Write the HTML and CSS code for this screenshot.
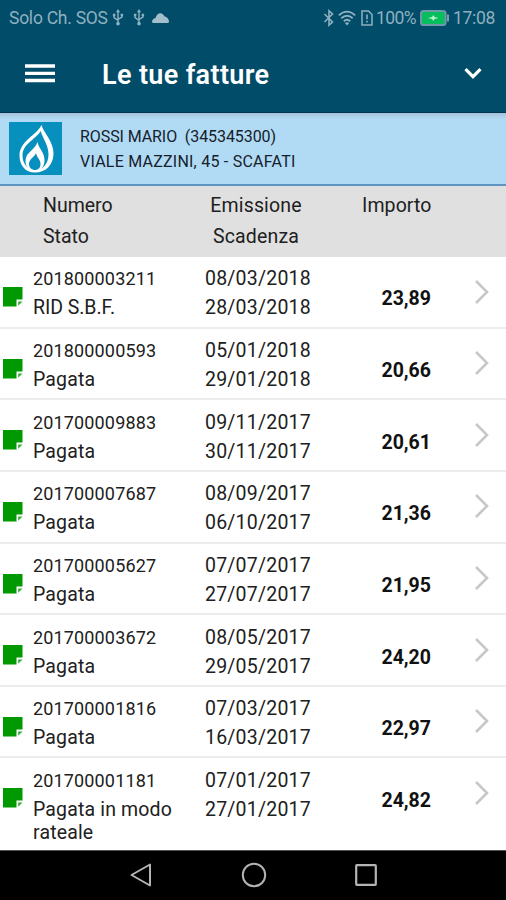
FILE: index.html
```html
<!DOCTYPE html>
<html lang="it">
<head>
<meta charset="utf-8">
<title>Le tue fatture</title>
<link rel="stylesheet" href="styles.css">
</head>
<body>
<svg class="defs" width="0" height="0">
  <symbol id="usb" viewBox="0 0 12 18"><path d="M6 2v14M1.8 6v3.2L6 12M10.2 6v2.5L6 11" fill="none" stroke="currentColor" stroke-width="1.5"/><path d="M6 0L3.8 3.5h4.4zM.6 5h2.6v2.6H.6zM8.8 5h2.6v2.6H8.8z" fill="currentColor"/><circle cx="6" cy="15.5" r="1.900" fill="currentColor"/></symbol>
  <symbol id="note" viewBox="0 0 20 20"><path d="M0 0h19.5v12.500h-6v7H0z" fill="#009900"/><path d="M15.200 18.800v-4.300h4.300z" fill="#009900" opacity=".8"/></symbol>
  <symbol id="next" viewBox="0 0 16 26"><path d="M2 2l11 11L2 24" fill="none" stroke="#c7c7c7" stroke-width="2.6"/></symbol>
</svg>
<header class="top">
  <div class="status">
    <span class="carrier">Solo Ch. SOS</span>
    <svg class="usb" width="12" height="17"><use href="#usb"/></svg>
    <svg class="usb second" width="12" height="17"><use href="#usb"/></svg>
    <svg class="cloud" width="17" height="10" viewBox="0 0 17 10"><path d="M1.500 10Q0 10 0 8.500C.3 6.800 1.500 5.500 3.500 5 4.500 2 6 .3 8.300.3c2 0 3.300 1.400 4 3C15 4 17 6 17 8.500Q17 10 15.500 10z" fill="#a3bfcb"/></svg>
    <span class="grow"></span>
    <svg class="bt" width="12" height="18" viewBox="0 0 12 18"><path d="M1.500 5l8 8L6 16.200V1.800L9.500 5l-8 8" fill="none" stroke="currentColor" stroke-width="1.600"/></svg>
    <svg class="wifi" width="18" height="16" viewBox="0 0 18 16"><path d="M.8 5.300Q9-2 17.200 5.300M3.300 8.300Q9 3.300 14.700 8.300M5.800 11.200Q9 8.400 12.200 11.200" fill="none" stroke="currentColor" stroke-width="1.800"/><path d="M6.800 13Q9 11.500 11.200 13L9 15.500z" fill="currentColor"/></svg>
    <svg class="sim" width="12" height="16" viewBox="0 0 12 16"><path d="M1 1h6.500L11 4.500V15H1z" fill="none" stroke="currentColor" stroke-width="1.500"/><path d="M6 4.500v4.800M6 10.800v1.800" stroke="currentColor" stroke-width="1.600"/></svg>
    <span class="percent">100%</span>
    <svg class="battery" width="29" height="16" viewBox="0 0 29 16"><rect x="1" y="1" width="24.600" height="14" rx="2.500" fill="#06bf5c" stroke="#6f98aa" stroke-width="2"/><path d="M28 4.500v7" stroke="#8fabb9" stroke-width="1.700"/><path d="M8 8l4-1L13.300 5l1.200 2 4 1-4 1-1.200 2L12 9z" fill="#b9f3cf"/></svg>
    <span class="clock">17:08</span>
  </div>
  <div class="appbar">
    <svg class="menu" width="30" height="20" viewBox="0 0 30 20"><path d="M0 2h30M0 9.300h30M0 16.500h30" stroke="#fff" stroke-width="3.300"/></svg>
    <h1>Le tue fatture</h1>
    <svg class="down" width="18" height="13" viewBox="0 0 18 13"><path d="M1.500 2.200L9 9.700l7.500-7.500" fill="none" stroke="#fff" stroke-width="3.200"/></svg>
  </div>
</header>
<section class="customer">
  <svg class="logo" width="53" height="53" viewBox="0 0 53 53"><path d="M0 0h53v53H0z" fill="#078fbd"/><path fill-rule="evenodd" d="M32.500 3C34.500 11 44.500 19 44.500 31.500c0 11-7.500 19-18.500 19-10 0-15.500-7.500-15.500-17C10.500 19 28 13 32.500 3zM31.700 9C26 18 13.500 22 13.500 33.500c0 8 5 14.500 12.500 14.500 8 0 13.500-6.500 13.500-15.500 0-9.500-5.500-15.500-7.800-23.500z" fill="#fff"/><path fill-rule="evenodd" d="M28.500 20C30 27 35.500 30 35.500 38.500c0 6-4 10.500-9.500 10.500S16.500 45 16.500 39C16.500 30 26 28 28.500 20zM27 31C25 36 20 36.500 20 42c0 3.500 2.500 6 6 6s5.500-2.500 5.500-6c0-4.500-3.500-6-4.500-11z" fill="#fff"/></svg>
  <div class="who"><div class="name">ROSSI MARIO &nbsp;(345345300)</div><div class="address">VIALE MAZZINI, 45 - SCAFATI</div></div>
</section>
<div class="heads">
  <div class="h-left"><div>Numero</div><div>Stato</div></div>
  <div class="h-mid"><div>Emissione</div><div>Scadenza</div></div>
  <div class="h-right">Importo</div>
</div>
<main>
  <article class="row"><svg class="note"><use href="#note"/></svg><div class="bill"><div class="num">201800003211</div><div class="state rid">RID S.B.F.</div></div><div class="dates"><div>08/03/2018</div><div>28/03/2018</div></div><div class="amount">23,89</div><svg class="next"><use href="#next"/></svg></article>
  <article class="row"><svg class="note"><use href="#note"/></svg><div class="bill"><div class="num">201800000593</div><div class="state">Pagata</div></div><div class="dates"><div>05/01/2018</div><div>29/01/2018</div></div><div class="amount">20,66</div><svg class="next"><use href="#next"/></svg></article>
  <article class="row"><svg class="note"><use href="#note"/></svg><div class="bill"><div class="num">201700009883</div><div class="state">Pagata</div></div><div class="dates"><div>09/11/2017</div><div>30/11/2017</div></div><div class="amount">20,61</div><svg class="next"><use href="#next"/></svg></article>
  <article class="row"><svg class="note"><use href="#note"/></svg><div class="bill"><div class="num">201700007687</div><div class="state">Pagata</div></div><div class="dates"><div>08/09/2017</div><div>06/10/2017</div></div><div class="amount">21,36</div><svg class="next"><use href="#next"/></svg></article>
  <article class="row"><svg class="note"><use href="#note"/></svg><div class="bill"><div class="num">201700005627</div><div class="state">Pagata</div></div><div class="dates"><div>07/07/2017</div><div>27/07/2017</div></div><div class="amount">21,95</div><svg class="next"><use href="#next"/></svg></article>
  <article class="row"><svg class="note"><use href="#note"/></svg><div class="bill"><div class="num">201700003672</div><div class="state">Pagata</div></div><div class="dates"><div>08/05/2017</div><div>29/05/2017</div></div><div class="amount">24,20</div><svg class="next"><use href="#next"/></svg></article>
  <article class="row"><svg class="note"><use href="#note"/></svg><div class="bill"><div class="num">201700001816</div><div class="state">Pagata</div></div><div class="dates"><div>07/03/2017</div><div>16/03/2017</div></div><div class="amount">22,97</div><svg class="next"><use href="#next"/></svg></article>
  <article class="row last"><svg class="note"><use href="#note"/></svg><div class="bill"><div class="num">201700001181</div><div class="state">Pagata in modo rateale</div></div><div class="dates"><div>07/01/2017</div><div>27/01/2017</div></div><div class="amount">24,82</div><svg class="next"><use href="#next"/></svg></article>
</main>
<nav class="system">
  <svg width="22" height="24" viewBox="0 0 22 24"><path d="M20 1.500v21L1.500 12z" fill="none" stroke="#b4b4b4" stroke-width="2" stroke-linejoin="round"/></svg>
  <svg width="26" height="26" viewBox="0 0 26 26"><circle cx="13" cy="13" r="11.200" fill="none" stroke="#b4b4b4" stroke-width="2"/></svg>
  <svg width="22" height="22" viewBox="0 0 22 22"><rect x="1.200" y="1.200" width="19.600" height="19.600" rx=".5" fill="none" stroke="#b4b4b4" stroke-width="2.200"/></svg>
</nav>
</body>
</html>
```
FILE: styles.css
```css
* { box-sizing: border-box; }
body {
  margin: 0;
  width: 506px;
  height: 900px;
  overflow: hidden;
  display: flex;
  flex-direction: column;
  background: #fff;
  color: #202020;
  font-family: Roboto, "Liberation Sans", sans-serif;
}
svg { display: block; flex: none; }
.defs { position: absolute; }
.top { height: 113px; background: #004c69; border-bottom: 1px solid #003550; flex: none; }
.status { height: 35px; display: flex; align-items: center; padding: 0 11px 0 9px; color: #8fb0bf; font-size: 17.5px; line-height: 20px; }
.carrier { width: 103px; white-space: nowrap; letter-spacing: -.25px; }
.usb.second { margin-left: 9px; }
.cloud { margin-left: 7px; }
.grow { flex: 1; }
.wifi { margin-left: 3px; }
.sim { margin-left: 5px; }
.percent { margin-left: 3px; width: 44px; letter-spacing: -.55px; }
.clock { margin-left: 4px; width: 42px; letter-spacing: -.3px; }
.appbar { height: 77px; display: flex; align-items: center; padding: 0 24px 0 25px; }
h1 { flex: 1; margin: 2px 0 0 47px; font-size: 27px; line-height: 32px; font-weight: 600; color: #fff; letter-spacing: .35px; }
.customer { height: 73px; flex: none; display: flex; background: linear-gradient(#a5c3da, #b1daf4 6px); border-bottom: 2px solid #6094c0; padding: 9px 9px 0; }
.who { margin: 2px 0 0 18px; font-size: 16px; line-height: 25px; white-space: nowrap; color: #15212b; }
.name { letter-spacing: -.08px; }
.address { letter-spacing: .23px; }
.heads { height: 71px; flex: none; display: flex; background: #e0e0e0; font-size: 19.5px; line-height: 31px; padding-top: 4px; }
.h-left { width: 162px; padding-left: 43px; letter-spacing: 0; }
.h-mid { width: 188px; text-align: center; letter-spacing: .15px; }
.h-right { margin-left: 12px; letter-spacing: .1px; }
main { flex: none; height: 593px; }
.row { height: 71.650px; display: flex; border-bottom: 2px solid #ececec; }
.row.last { height: 92px; border-bottom: 0; }
.note { width: 20px; height: 20px; margin: 30px 0 0 3px; }
.bill { width: 145px; margin-left: 10px; padding-top: 8.300px; }
.num { font-size: 18px; line-height: 28px; letter-spacing: .15px; }
.state { font-size: 19.500px; line-height: 23px; padding-top: 3px; letter-spacing: .15px; }
.rid { letter-spacing: -.05px; }
.dates { width: 145px; margin-left: 27px; padding-top: 7.300px; font-size: 19.500px; line-height: 29px; letter-spacing: .22px; }
.amount { width: 81px; padding: 27.300px 0 0; line-height: 29px; text-align: right; font-size: 19.500px; font-weight: 700; color: #111; }
.next { width: 16px; height: 26px; margin: 21.500px 0 0 43px; }
.system { flex: 1; display: flex; align-items: center; background: #000; border-top: 1px solid #555; padding: 0 0 1px 130px; }
.system svg + svg { margin-left: 88.500px; }
```
